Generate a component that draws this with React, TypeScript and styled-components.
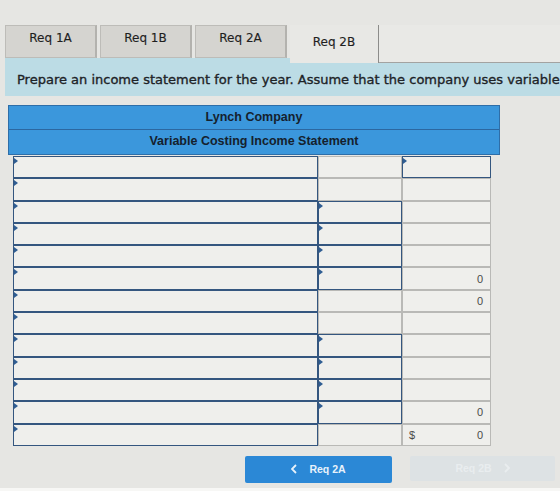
import React from "react";
import styled, { createGlobalStyle } from "styled-components";

type Row = {
  amount: boolean;
  total: boolean;
  value?: string;
  dollar?: boolean;
};

// which cells take input in each line of the statement
const rows: Row[] = [
  { amount: false, total: true },
  { amount: false, total: false },
  { amount: true, total: false },
  { amount: true, total: false },
  { amount: true, total: false },
  { amount: true, total: false, value: "0" },
  { amount: false, total: false, value: "0" },
  { amount: false, total: false },
  { amount: true, total: false },
  { amount: true, total: false },
  { amount: true, total: false },
  { amount: true, total: false, value: "0" },
  { amount: false, total: false, value: "0", dollar: true },
];

const tabs = ["Req 1A", "Req 1B", "Req 2A", "Req 2B"];

const GlobalStyle = createGlobalStyle`
  html, body {
    margin: 0;
    padding: 0;
  }
  body {
    width: 560px;
    height: 491px;
    overflow: hidden;
    background: #e6e6e3;
    font-family: "DejaVu Sans", Verdana, sans-serif;
  }
`;

const Page = styled.div`
  height: 491px;
  box-sizing: border-box;
  padding: 25px 0 0 5px;
  border-bottom: 3px solid #f7f7f5;
  display: flex;
  flex-direction: column;
`;

const TabBar = styled.div`
  display: flex;
  height: 33px;
`;

const Tab = styled.div<{ $active?: boolean }>`
  position: relative;
  z-index: 1;
  box-sizing: border-box;
  flex: 0 0 auto;
  width: ${(p) => (p.$active ? "89px" : "92px")};
  height: ${(p) => (p.$active ? "38px" : "33px")};
  margin-right: ${(p) => (p.$active ? "0" : "3px")};
  padding-top: ${(p) => (p.$active ? "10px" : "5px")};
  text-align: center;
  font-size: 12px;
  color: #1f1f1f;
  -webkit-text-stroke: 0.15px #1f1f1f;
  background: ${(p) => (p.$active ? "#e8e8e5" : "#d5d4d0")};
  border: ${(p) => (p.$active ? "none" : "1px solid #bdbcb8")};
  border-right: ${(p) => (p.$active ? "1px solid #8c8c8a" : "2px solid #b3b2ae")};
`;

const TabFiller = styled.div`
  position: relative;
  z-index: 1;
  flex: 1;
  height: 38px;
  box-sizing: border-box;
  background: #e9e9e6;
  border-bottom: 1px solid #a3a3a1;
`;

const Instructions = styled.div`
  height: 38px;
  box-sizing: border-box;
  padding: 14px 0 0 12px;
  line-height: 16px;
  background: #bcdce5;
  font-size: 13px;
  color: #1d2327;
  white-space: nowrap;
  overflow: hidden;
  -webkit-text-stroke: 0.35px #1d2327;
`;

const Statement = styled.div`
  margin: 9px 0 0 3px;
  width: 492px;
`;

const Heading = styled.div`
  background: #3b97dc;
  border: 1px solid #2e6ea8;
`;

const HeadingRow = styled.div<{ $last?: boolean }>`
  height: ${(p) => (p.$last ? "24px" : "23px")};
  line-height: 23px;
  text-align: center;
  font-family: "Liberation Sans", Arial, sans-serif;
  font-weight: bold;
  font-size: 12.5px;
  color: #15212d;
  border-bottom: ${(p) => (p.$last ? "none" : "1px solid #2c67a0")};
`;

const Grid = styled.div`
  display: grid;
  margin: 1px 0 0 5px;
  grid-template-columns: 305px 84px 89px;
  grid-auto-rows: 22.3px;
`;

const Cell = styled.div<{ $input?: boolean }>`
  position: relative;
  box-sizing: border-box;
  display: flex;
  align-items: center;
  justify-content: space-between;
  padding: 0 7px 0 6px;
  background: #efefec;
  border: 1px solid ${(p) => (p.$input ? "#34567f" : "#b9b9b6")};
  font-family: "Liberation Sans", Arial, sans-serif;
  font-size: 11px;
  color: #4a4a4a;

  &::before {
    content: "";
    display: ${(p) => (p.$input ? "block" : "none")};
    position: absolute;
    top: 1px;
    left: 0;
    border-left: 4px solid #2f5d92;
    border-top: 3px solid transparent;
    border-bottom: 3px solid transparent;
  }
`;

const Value = styled.span`
  margin-left: auto;
`;

const Footer = styled.div`
  display: flex;
  align-items: flex-start;
  margin-top: 10px;
  padding-left: 240px;
`;

const NavButton = styled.div<{ $disabled?: boolean }>`
  box-sizing: border-box;
  display: flex;
  align-items: center;
  justify-content: center;
  gap: 12px;
  width: ${(p) => (p.$disabled ? "145px" : "147px")};
  height: ${(p) => (p.$disabled ? "25px" : "27px")};
  margin-left: ${(p) => (p.$disabled ? "18px" : "0")};
  border-radius: 2px;
  background: ${(p) => (p.$disabled ? "#dde2e4" : "#2b88d6")};
  color: ${(p) => (p.$disabled ? "#e9edef" : "#e8f2fb")};
  font-family: "Liberation Sans", Arial, sans-serif;
  font-weight: bold;
  font-size: 10.5px;
`;

const Chevron = ({ dir }: { dir: "left" | "right" }) => (
  <svg width="6" height="10" viewBox="0 0 6 10">
    <path
      d={dir === "left" ? "M5 1 L1 5 L5 9" : "M1 1 L5 5 L1 9"}
      fill="none"
      stroke="currentColor"
      strokeWidth="1.8"
    />
  </svg>
);

export default function App() {
  return (
    <>
      <GlobalStyle />
      <Page>
        <TabBar>
          {tabs.map((t, i) => (
            <Tab key={t} $active={i === tabs.length - 1}>
              {t}
            </Tab>
          ))}
          <TabFiller />
        </TabBar>
        <Instructions>
          Prepare an income statement for the year. Assume that the company uses variable costing.
        </Instructions>
        <Statement>
          <Heading>
            <HeadingRow>Lynch Company</HeadingRow>
            <HeadingRow $last>Variable Costing Income Statement</HeadingRow>
          </Heading>
          <Grid>
            {rows.map((r, i) => (
              <React.Fragment key={i}>
                <Cell $input />
                <Cell $input={r.amount} />
                <Cell $input={r.total}>
                  {r.dollar && <span>$</span>}
                  {r.value && <Value>{r.value}</Value>}
                </Cell>
              </React.Fragment>
            ))}
          </Grid>
        </Statement>
        <Footer>
          <NavButton>
            <Chevron dir="left" />
            Req 2A
          </NavButton>
          <NavButton $disabled>
            Req 2B
            <Chevron dir="right" />
          </NavButton>
        </Footer>
      </Page>
    </>
  );
}
